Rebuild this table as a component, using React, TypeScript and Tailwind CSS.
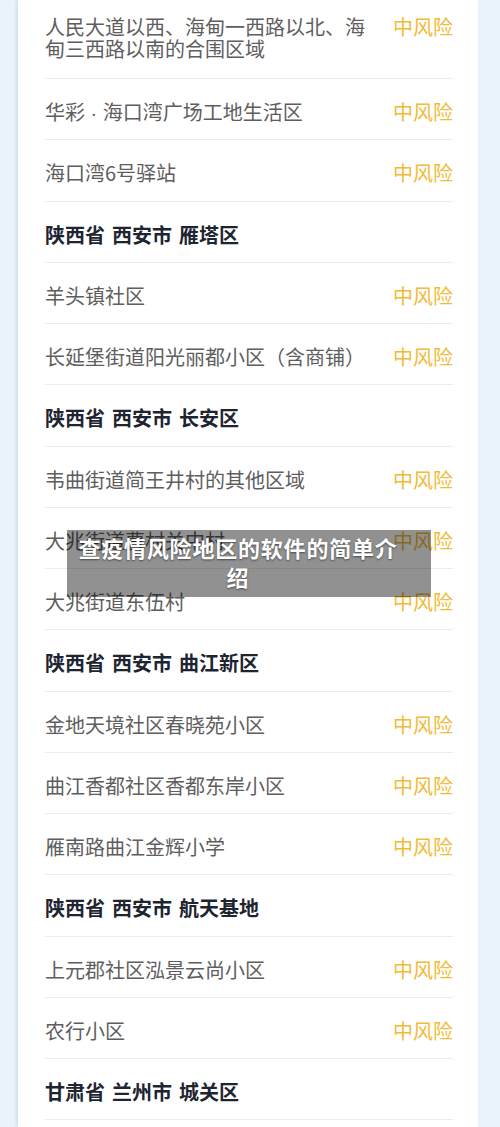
import React from 'react';

type Row =
    | { kind: 'area'; parts: string[] }
    | { kind: 'place'; name: React.ReactNode; risk: string };

const dot = <span style={{ fontFamily: '"Liberation Sans", sans-serif' }}> · </span>;

const rows: Row[] = [
    { kind: 'place', name: <>华彩{dot}海口湾广场工地生活区</>, risk: '中风险' },
    { kind: 'place', name: '海口湾6号驿站', risk: '中风险' },
    { kind: 'area', parts: ['陕西省', '西安市', '雁塔区'] },
    { kind: 'place', name: '羊头镇社区', risk: '中风险' },
    { kind: 'place', name: '长延堡街道阳光丽都小区（含商铺）', risk: '中风险' },
    { kind: 'area', parts: ['陕西省', '西安市', '长安区'] },
    { kind: 'place', name: '韦曲街道简王井村的其他区域', risk: '中风险' },
    { kind: 'place', name: '大兆街道曹村关中村', risk: '中风险' },
    { kind: 'place', name: '大兆街道东伍村', risk: '中风险' },
    { kind: 'area', parts: ['陕西省', '西安市', '曲江新区'] },
    { kind: 'place', name: '金地天境社区春晓苑小区', risk: '中风险' },
    { kind: 'place', name: '曲江香都社区香都东岸小区', risk: '中风险' },
    { kind: 'place', name: '雁南路曲江金辉小学', risk: '中风险' },
    { kind: 'area', parts: ['陕西省', '西安市', '航天基地'] },
    { kind: 'place', name: '上元郡社区泓景云尚小区', risk: '中风险' },
    { kind: 'place', name: '农行小区', risk: '中风险' },
    { kind: 'area', parts: ['甘肃省', '兰州市', '城关区'] },
];

export default function App() {
    return (
        <div
            className="relative h-[1127px] w-[500px] overflow-hidden bg-[#eaf3fb] pl-[18px] pr-[22px]"
            style={{ fontFamily: '"Noto Sans CJK SC", "Noto Sans", sans-serif' }}
        >
            <div className="h-full bg-white pl-[27px] pr-[25px] shadow-[-2px_0_3px_rgba(160,185,210,0.35)]">
                {/* first entry is cut off at the top of the shot */}
                <div className="flex h-[79px] items-start justify-between border-b border-[#ececec] pt-[16px]">
                    <p className="w-[322px] text-[20px] leading-[22px] text-[#5e5e5e]">
                        人民大道以西、海甸一西路以北、海甸三西路以南的合围区域
                    </p>
                    <span className="text-[20px] leading-[22px] text-[#f1bb36]">中风险</span>
                </div>
                {rows.map((row, i) => (
                    <div
                        key={i}
                        className="flex h-[61.25px] items-center justify-between border-b border-[#ececec] pt-[6px]"
                    >
                        {row.kind === 'area' ? (
                            <div className="flex gap-[7px] text-[20px] font-bold leading-[22px] text-[#1e2531]">
                                {row.parts.map((p) => (
                                    <span key={p}>{p}</span>
                                ))}
                            </div>
                        ) : (
                            <>
                                <span className="text-[20px] leading-[22px] text-[#5e5e5e]">{row.name}</span>
                                <span className="text-[20px] leading-[22px] text-[#f1bb36]">{row.risk}</span>
                            </>
                        )}
                    </div>
                ))}
            </div>

            <div className="absolute left-[67px] top-[530px] flex h-[67px] w-[364px] items-center bg-[rgba(0,0,0,0.43)] pl-[10px] pr-[32px]">
                <h1 className="w-full pb-[4px] text-center text-[22px] font-bold leading-[29px] tracking-[0.8px] text-white [text-shadow:0_1px_2px_rgba(0,0,0,0.5)]">
                    查疫情风险地区的软件的简单介绍
                </h1>
            </div>
        </div>
    );
}
